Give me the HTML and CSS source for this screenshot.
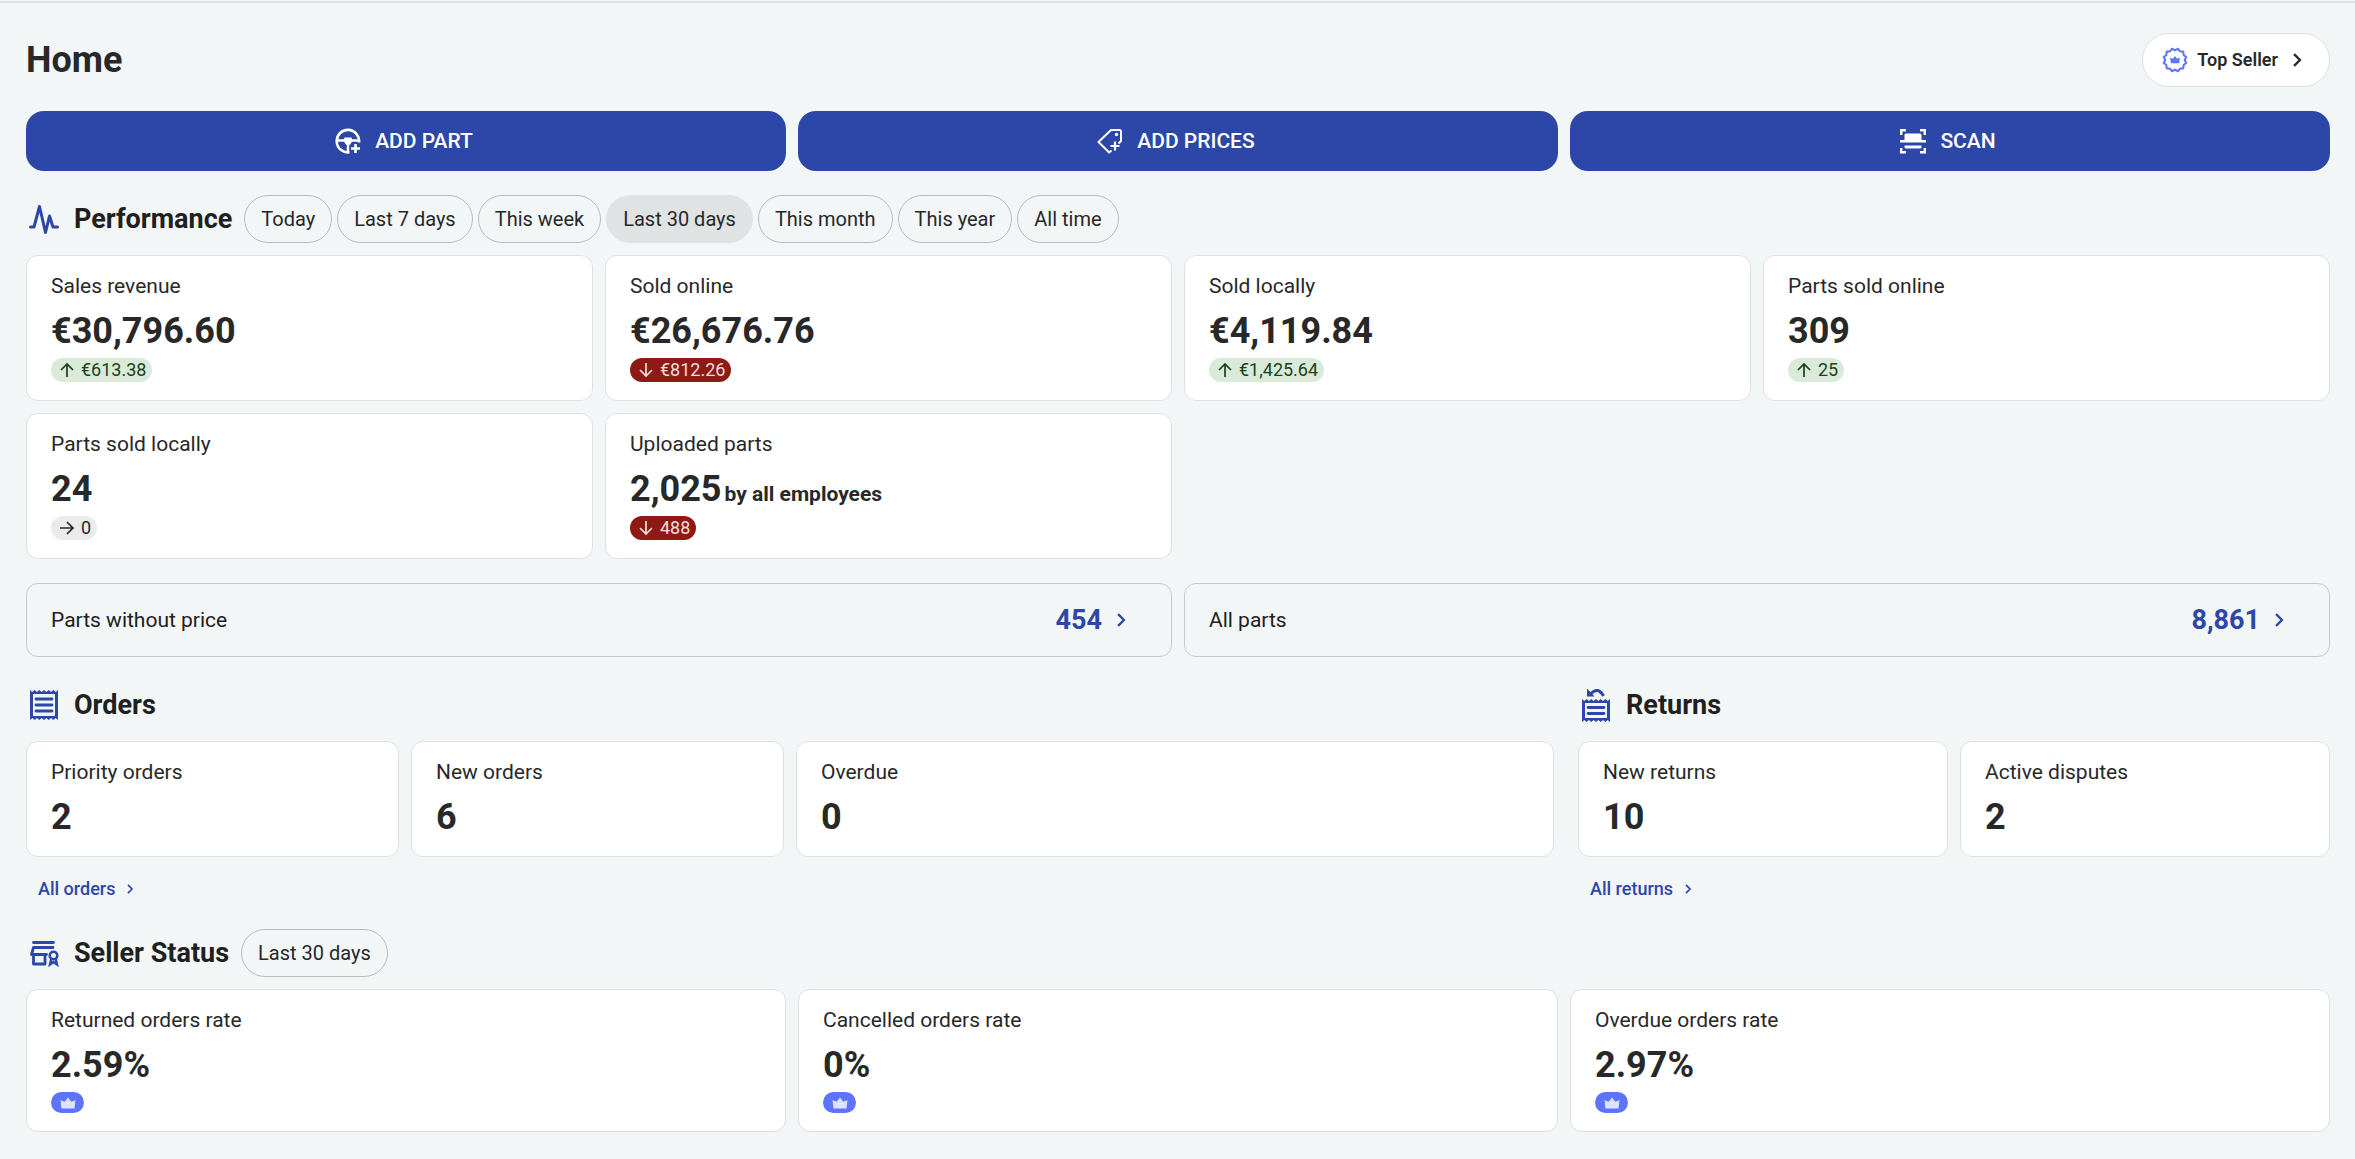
FILE: index.html
```html
<!DOCTYPE html>
<html lang="en">
<head>
    <meta charset="UTF-8">
    <meta name="viewport" content="width=device-width, initial-scale=1">
    <title>Home</title>
    <link rel="stylesheet" href="styles.css">
</head>
<body>

<!-- shared icons -->
<svg class="sprite" aria-hidden="true">
    <symbol id="chevron" viewBox="0 0 24 24">
        <path d="M8.5 5l7 7-7 7" fill="none" stroke="currentColor" stroke-width="2.8"/>
    </symbol>
    <symbol id="arrow-up" viewBox="0 0 16 16">
        <path d="M8 15V2M2 8l6-6 6 6" fill="none" stroke="currentColor" stroke-width="1.7"/>
    </symbol>
    <symbol id="arrow-down" viewBox="0 0 16 16">
        <path d="M8 1v13M2 8l6 6 6-6" fill="none" stroke="currentColor" stroke-width="1.7"/>
    </symbol>
    <symbol id="arrow-right" viewBox="0 0 16 16">
        <path d="M1 8h13M8 2l6 6-6 6" fill="none" stroke="currentColor" stroke-width="1.7"/>
    </symbol>
    <symbol id="crown" viewBox="0 0 16 12">
        <path d="M1.500 11.500L.5 3.200l4.200 1.600L8 .5l3.300 4.300 4.200-1.600-1 8.300z" fill="currentColor"/>
    </symbol>
</svg>

<main class="page">
    <header class="page-header">
        <h1 class="page-title">Home</h1>
        <a href="#" class="seller-link">
            <svg class="seller-icon" viewBox="0 0 24 24" aria-hidden="true">
                <path d="M12 3L14.800 1.700 16.600 4 19.600 4.400 20 7.400 22.300 9.200 21 12 22.300 14.800 20 16.600 19.600 19.600 16.600 20 14.800 22.300 12 21 9.200 22.300 7.400 20 4.400 19.600 4 16.600 1.700 14.800 3 12 1.700 9.200 4 7.400 4.400 4.400 7.400 4 9.200 1.700z" fill="none" stroke="currentColor" stroke-width="1.900"/>
                <path d="M8.200 15l-.7-5.300 2.600 1.200L12 8.300l1.900 2.600 2.600-1.200-.7 5.300z" fill="currentColor"/>
            </svg>
            Top Seller
            <svg class="seller-chevron" aria-hidden="true"><use href="#chevron"/></svg>
        </a>
    </header>

    <div class="actions">
        <button type="button" class="action">
            <svg class="action-icon" viewBox="0 0 26 26" aria-hidden="true">
                <path d="M24 14.500A11.200 11.200 0 1 0 14.500 24.200" fill="none" stroke="currentColor" stroke-width="2.600"/>
                <path d="M2 12.500h22M13 14v10" fill="none" stroke="currentColor" stroke-width="2.400"/>
                <path d="M9.500 9.500h7l1.200 3-2.700 4.200h-4l-2.700-4.200z" fill="currentColor"/>
                <path d="M20.500 16v9M16 20.500h9" stroke="#2c47a8" stroke-width="5"/>
                <path d="M20.500 16v9M16 20.500h9" stroke="currentColor" stroke-width="2.600"/>
            </svg>
            ADD PART
        </button>
        <button type="button" class="action">
            <svg class="action-icon" viewBox="0 0 26 26" aria-hidden="true">
                <path d="M14.500 22.500L12.200 24.500 1.500 14 14 2h8.500q1.500 0 1.500 1.500V13l-2.500 2.500" fill="none" stroke="currentColor" stroke-width="2" stroke-linejoin="round"/>
                <circle cx="19.500" cy="6.500" r="1.700" fill="currentColor"/>
                <path d="M18 13.500v9M13.500 18h9" stroke="currentColor" stroke-width="2.200"/>
            </svg>
            ADD PRICES
        </button>
        <button type="button" class="action">
            <svg class="action-icon" viewBox="0 0 26 26" aria-hidden="true">
                <path d="M1.200 7V2.200H6M20 2.200h4.800V7M1.200 20v4.300H6M20 24.300h4.800V20" fill="none" stroke="currentColor" stroke-width="2.400"/>
                <path d="M4.500 12V7q0-1.500 1.500-1.500h14q1.500 0 1.500 1.500v5zM4.500 17.500h17v1.500q0 1.500-1.500 1.500H6q-1.500 0-1.500-1.500zM0 12h26v2.400H0z" fill="currentColor"/>
            </svg>
            SCAN
        </button>
    </div>

    <section class="performance">
        <div class="section-head">
            <svg class="section-icon" viewBox="0 0 32 32" aria-hidden="true">
                <path d="M2.500 24H6l5.500-20.500 6 26 4-16.500 3.500 11h4.500" fill="none" stroke="currentColor" stroke-width="3" stroke-linejoin="round" stroke-linecap="round"/>
            </svg>
            <h2 class="section-title">Performance</h2>
            <div class="chips">
                <button type="button" class="chip">Today</button>
                <button type="button" class="chip">Last 7 days</button>
                <button type="button" class="chip">This week</button>
                <button type="button" class="chip chip-active" aria-pressed="true">Last 30 days</button>
                <button type="button" class="chip">This month</button>
                <button type="button" class="chip">This year</button>
                <button type="button" class="chip">All time</button>
            </div>
        </div>
        <div class="cards cards-four">
            <div class="card">
                <div class="card-label">Sales revenue</div>
                <div class="card-value">€30,796.60</div>
                <div class="badge badge-up"><svg class="badge-icon" aria-hidden="true"><use href="#arrow-up"/></svg>€613.38</div>
            </div>
            <div class="card">
                <div class="card-label">Sold online</div>
                <div class="card-value">€26,676.76</div>
                <div class="badge badge-down"><svg class="badge-icon" aria-hidden="true"><use href="#arrow-down"/></svg>€812.26</div>
            </div>
            <div class="card">
                <div class="card-label">Sold locally</div>
                <div class="card-value">€4,119.84</div>
                <div class="badge badge-up"><svg class="badge-icon" aria-hidden="true"><use href="#arrow-up"/></svg>€1,425.64</div>
            </div>
            <div class="card">
                <div class="card-label">Parts sold online</div>
                <div class="card-value">309</div>
                <div class="badge badge-up"><svg class="badge-icon" aria-hidden="true"><use href="#arrow-up"/></svg>25</div>
            </div>
            <div class="card">
                <div class="card-label">Parts sold locally</div>
                <div class="card-value">24</div>
                <div class="badge"><svg class="badge-icon" aria-hidden="true"><use href="#arrow-right"/></svg>0</div>
            </div>
            <div class="card">
                <div class="card-label">Uploaded parts</div>
                <div class="card-value">2,025<span class="card-note">by all employees</span></div>
                <div class="badge badge-down"><svg class="badge-icon" aria-hidden="true"><use href="#arrow-down"/></svg>488</div>
            </div>
        </div>
    </section>

    <div class="stock">
        <a href="#" class="stock-link">
            Parts without price
            <span class="stock-count">454<svg class="stock-chevron" aria-hidden="true"><use href="#chevron"/></svg></span>
        </a>
        <a href="#" class="stock-link">
            All parts
            <span class="stock-count">8,861<svg class="stock-chevron" aria-hidden="true"><use href="#chevron"/></svg></span>
        </a>
    </div>

    <div class="trade">
        <section class="orders">
            <div class="section-head">
                <svg class="section-icon" viewBox="0 0 32 32" aria-hidden="true">
                    <path d="M2 1l2.300 2 2.300-2 2.350 2 2.350-2 2.350 2L16 1l2.350 2 2.350-2 2.350 2 2.350-2 2.300 2L30 1v30l-2.300-2-2.300 2-2.350-2-2.350 2-2.350-2L16 31l-2.350-2-2.350 2-2.350-2-2.350 2-2.300-2L2 31zM5 5v22h22V5z" fill="currentColor" fill-rule="evenodd"/>
                    <path d="M8 10h16M8 16h16M8 22h16" stroke="currentColor" stroke-width="2.800" stroke-linecap="round"/>
                </svg>
                <h2 class="section-title">Orders</h2>
            </div>
            <div class="cards cards-four">
                <div class="card">
                    <div class="card-label">Priority orders</div>
                    <div class="card-value">2</div>
                </div>
                <div class="card">
                    <div class="card-label">New orders</div>
                    <div class="card-value">6</div>
                </div>
                <div class="card card-wide">
                    <div class="card-label">Overdue</div>
                    <div class="card-value">0</div>
                </div>
            </div>
            <a href="#" class="more">All orders<svg class="more-chevron" aria-hidden="true"><use href="#chevron"/></svg></a>
        </section>
        <section class="returns">
            <div class="section-head">
                <svg class="section-icon" viewBox="0 0 32 36" aria-hidden="true">
                    <path d="M2 12l2.300 2 2.300-2 2.350 2 2.350-2 2.350 2L16 12l2.350 2 2.350-2 2.350 2 2.350-2 2.300 2L30 12v23l-2.300-2-2.300 2-2.350-2-2.350 2-2.350-2L16 35l-2.350-2-2.350 2-2.350-2-2.350 2-2.300-2L2 35zM5 16v15h22V16z" fill="currentColor" fill-rule="evenodd"/>
                    <path d="M8 20.500h16M8 26.500h16" stroke="currentColor" stroke-width="2.800" stroke-linecap="round"/>
                    <path d="M10.500 7Q18-1 23.500 9" fill="none" stroke="currentColor" stroke-width="3"/>
                    <path d="M7 1.500v8h7.500z" fill="currentColor"/>
                </svg>
                <h2 class="section-title">Returns</h2>
            </div>
            <div class="cards cards-two">
                <div class="card">
                    <div class="card-label">New returns</div>
                    <div class="card-value">10</div>
                </div>
                <div class="card">
                    <div class="card-label">Active disputes</div>
                    <div class="card-value">2</div>
                </div>
            </div>
            <a href="#" class="more">All returns<svg class="more-chevron" aria-hidden="true"><use href="#chevron"/></svg></a>
        </section>
    </div>

    <section class="seller-status">
        <div class="section-head">
            <svg class="section-icon" viewBox="0 0 32 32" aria-hidden="true">
                <path d="M5.500 5.500h20" stroke="currentColor" stroke-width="2.800" stroke-linecap="round"/>
                <path d="M18.500 17.500H3.500l2-7h19.500M5.500 17.500V27h11.500v-9.500" fill="none" stroke="currentColor" stroke-width="2.800" stroke-linejoin="round" stroke-linecap="round"/>
                <circle cx="25.500" cy="18.500" r="3.800" fill="none" stroke="currentColor" stroke-width="2.600"/>
                <path d="M23.500 21l-1.500 6.500 3.500-2.500 3.500 2.500-1.500-6.500" fill="none" stroke="currentColor" stroke-width="2.400"/>
            </svg>
            <h2 class="section-title">Seller Status</h2>
            <button type="button" class="chip">Last 30 days</button>
        </div>
        <div class="cards cards-three">
            <div class="card">
                <div class="card-label">Returned orders rate</div>
                <div class="card-value">2.59%</div>
                <div class="rank"><svg class="rank-icon" role="img" aria-label="Top Seller"><use href="#crown"/></svg></div>
            </div>
            <div class="card">
                <div class="card-label">Cancelled orders rate</div>
                <div class="card-value">0%</div>
                <div class="rank"><svg class="rank-icon" role="img" aria-label="Top Seller"><use href="#crown"/></svg></div>
            </div>
            <div class="card">
                <div class="card-label">Overdue orders rate</div>
                <div class="card-value">2.97%</div>
                <div class="rank"><svg class="rank-icon" role="img" aria-label="Top Seller"><use href="#crown"/></svg></div>
            </div>
        </div>
    </section>
</main>

</body>
</html>
```
FILE: styles.css
```css
* {
    box-sizing: border-box;
}

body {
    margin: 0;
    background-color: #f2f6f7;
    color: #282828;
    font-family: Roboto, sans-serif;
    font-size: 21px;
    line-height: 28px;
}

a {
    text-decoration: none;
}

button {
    font-family: inherit;
    font-size: inherit;
    cursor: pointer;
}

svg {
    flex-shrink: 0;
}

.sprite {
    display: none;
}

.page {
    border-top: 2px solid #dde1e1;
    margin-top: 1px;
    padding: 30px 25px 24px 26px;
}

.page-header {
    display: flex;
    align-items: center;
    justify-content: space-between;
}

.page-title {
    margin: 0;
    font-size: 36px;
    line-height: 44px;
    font-weight: 700;
}

.seller-link {
    display: flex;
    align-items: center;
    height: 54px;
    padding: 0 22px 0 19px;
    border: 1px solid #dfe1e1;
    border-radius: 27px;
    background-color: white;
    color: #282828;
    font-size: 18px;
    font-weight: 600;
}

.seller-icon {
    width: 26px;
    height: 26px;
    margin-right: 9px;
    color: #5c74ff;
}

.seller-chevron {
    width: 20px;
    height: 20px;
    margin-left: 9px;
}

.actions {
    display: grid;
    grid-template-columns: repeat(3, 1fr);
    gap: 12px;
    margin-top: 24px;
}

.action {
    display: flex;
    align-items: center;
    justify-content: center;
    gap: 14px;
    height: 60px;
    padding: 0 28px 0 24px;
    border: 0;
    border-radius: 18px;
    background-color: #2c47a8;
    color: white;
    font-weight: 500;
}

.action-icon {
    width: 26px;
    height: 26px;
}

.performance {
    margin-top: 24px;
}

.section-head {
    display: flex;
    align-items: center;
    height: 48px;
    margin-bottom: 12px;
}

.section-icon {
    width: 32px;
    height: 36px;
    margin: 0 14px 0 2px;
    color: #2c47a8;
}

.section-title {
    margin: 0 12px 0 0;
    color: #1f2020;
    font-size: 27px;
    line-height: 36px;
    font-weight: 700;
}

.chips {
    display: flex;
    gap: 5px;
}

.chip {
    height: 48px;
    padding: 0 16px;
    border: 1px solid #b9bcbc;
    border-radius: 24px;
    background-color: transparent;
    color: #282828;
    font-size: 20px;
}

.chip-active {
    border-color: #dfe3e4;
    background-color: #dfe3e4;
}

.cards {
    display: grid;
    gap: 12px;
}

.cards-two {
    grid-template-columns: repeat(2, 1fr);
}

.cards-three {
    grid-template-columns: repeat(3, 1fr);
}

.cards-four {
    grid-template-columns: repeat(4, 1fr);
}

.card {
    padding: 16px 24px 17px;
    border: 1px solid #dfe1e1;
    border-radius: 12px;
    background-color: white;
}

.card-wide {
    grid-column: span 2;
}

.card-value {
    margin-top: 9px;
    font-size: 36px;
    line-height: 44px;
    font-weight: 700;
}

.card-note {
    margin-left: 3px;
    font-size: 21px;
    line-height: 28px;
}

.badge {
    display: flex;
    align-items: center;
    gap: 6px;
    width: fit-content;
    height: 24px;
    margin: 5px 0 1px;
    padding: 0 6px 0 8px;
    border-radius: 12px;
    background-color: #ebebeb;
    font-size: 18px;
}

.badge-up {
    background-color: #d9ead9;
    color: #1c401c;
}

.badge-down {
    background-color: #8f1a15;
    color: #f9dedc;
}

.badge-icon {
    width: 16px;
    height: 16px;
}

.stock {
    display: grid;
    grid-template-columns: repeat(2, 1fr);
    gap: 12px;
    margin-top: 24px;
}

.stock-link {
    display: flex;
    align-items: center;
    justify-content: space-between;
    height: 74px;
    padding: 0 40px 0 24px;
    border: 1px solid #c7cacb;
    border-radius: 12px;
    color: #1f2020;
}

.stock-count {
    display: flex;
    align-items: center;
    gap: 9px;
    color: #2c47a8;
    font-size: 27px;
    font-weight: 700;
}

.stock-chevron {
    width: 20px;
    height: 20px;
}

.trade {
    display: grid;
    grid-template-columns: repeat(3, 1fr);
    gap: 24px;
    margin-top: 24px;
}

.orders {
    grid-column: span 2;
}

.more {
    display: flex;
    align-items: center;
    width: fit-content;
    gap: 8px;
    margin-top: 12px;
    padding: 6px 12px;
    color: #2c47a8;
    font-size: 18px;
    font-weight: 500;
}

.more-chevron {
    width: 14px;
    height: 14px;
}

.seller-status {
    margin-top: 20px;
}

.rank {
    display: flex;
    align-items: center;
    justify-content: center;
    width: 33px;
    height: 21px;
    margin: 5px 0 1px;
    border-radius: 11px;
    background-color: #5c74ff;
    color: #dfe3ff;
}

.rank-icon {
    width: 16px;
    height: 12px;
}
```
